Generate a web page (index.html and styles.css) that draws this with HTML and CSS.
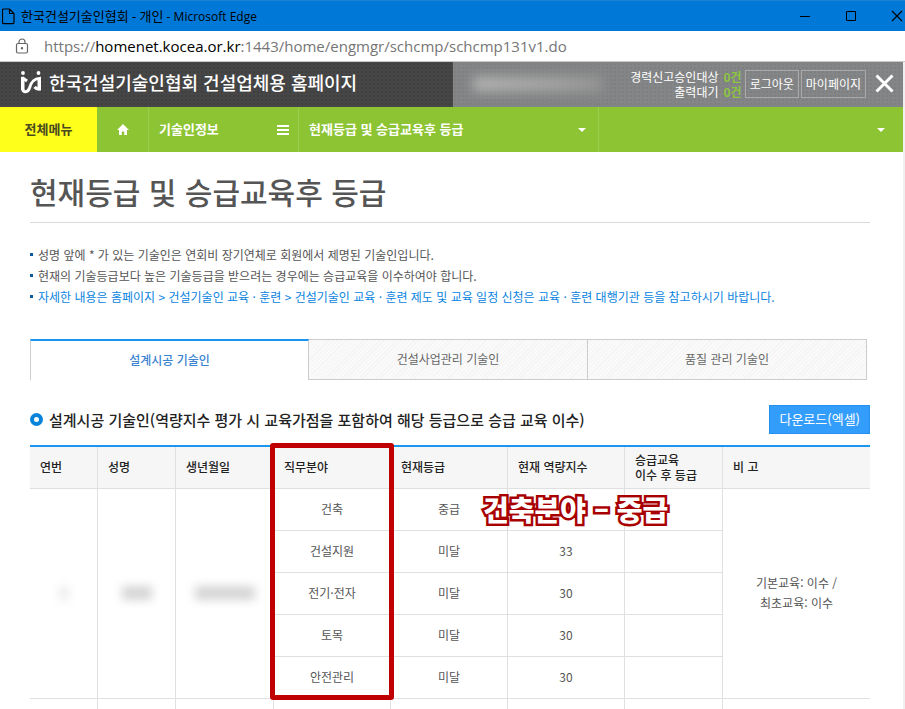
FILE: index.html
```html
<!DOCTYPE html>
<html lang="ko">
<head>
<meta charset="utf-8">
<meta name="viewport" content="width=device-width, initial-scale=1">
<title>한국건설기술인협회 - 개인</title>
<link rel="stylesheet" href="styles.css">
</head>
<body>
<div class="window">
  <div class="titlebar">
    <svg class="doc-icon" width="13" height="17" viewBox="0 0 13 17" fill="none" stroke="#000" stroke-width="1.2" aria-hidden="true"><path d="M1.5 1h6l4.5 4.5V14.500a1.200 1.200 0 0 1-1.200 1.200H1.700a1.200 1.200 0 0 1-1.200-1.200V2a1 1 0 0 1 1-1zM7.500 1v4.500H12"/></svg>
    <span class="window-title"><span class="window-name">한국건설기술인협회 - 개인</span> - Microsoft Edge</span>
    <div class="window-controls">
      <button type="button" aria-label="최소화"><svg width="12" height="12" viewBox="0 0 12 12" stroke="#000"><path d="M1 6.500h10"/></svg></button>
      <button type="button" aria-label="최대화"><svg width="12" height="12" viewBox="0 0 12 12" stroke="#000" fill="none"><path d="M1.500 1.500h9v9h-9z"/></svg></button>
      <button type="button" aria-label="닫기"><svg width="12" height="12" viewBox="0 0 12 12" stroke="#000" stroke-width="1.100"><path d="M1 1l10 10M11 1L1 11"/></svg></button>
    </div>
  </div>
  <div class="addressbar">
    <svg width="14" height="16" viewBox="0 0 14 16" fill="none" stroke="#666" stroke-width="1.200" aria-hidden="true"><rect x="1.500" y="5.500" width="11" height="9.500" rx="1.500"/><path d="M4 5.500V4a3 3 0 0 1 6 0v1.500"/><circle cx="7" cy="10.200" r=".6" fill="#666"/></svg>
    <span class="url">https://<span class="host">homenet.kocea.or.kr</span>:1443/home/engmgr/schcmp/schcmp131v1.do</span>
  </div>
  <div class="page">
    <header class="site-header">
      <a class="brand" href="#">
        <svg width="22" height="24" viewBox="0 0 22 24" aria-hidden="true"><g fill="#fff"><circle cx="3" cy="3" r="1.900"/><circle cx="18.500" cy="3" r="1.900"/><path d="M1 6.500L4.500 9V20H1z"/><path d="M17.500 8l3.500-1.500V20.500h-3.500z"/></g><path d="M2.500 18.500C3 23.500 8 22.500 9.500 18C11 13 13 8.500 19.500 8.500M2 7.500L7 11M14.500 17Q16 19 19.500 19" fill="none" stroke="#fff" stroke-width="3"/></svg>
        <span>한국건설기술인협회 건설업체용 홈페이지</span>
      </a>
      <div class="account">
        <span class="hidden-name" aria-hidden="true"></span>
        <dl class="counts">
          <dt>경력신고승인대상</dt><dd>0건</dd>
          <dt>출력대기</dt><dd>0건</dd>
        </dl>
        <div class="account-links">
          <a href="#">로그아웃</a>
          <a href="#">마이페이지</a>
        </div>
        <button class="close" type="button" aria-label="창 닫기"><svg width="19" height="19" viewBox="0 0 19 19" stroke="#fff" stroke-width="3"><path d="M1.500 1.500l16 16M17.500 1.500l-16 16"/></svg></button>
      </div>
    </header>
    <nav class="gnb">
      <a class="all-menu" href="#">전체메뉴</a>
      <a class="home" href="#" aria-label="홈"><svg width="12" height="11" viewBox="0 0 12 11" fill="#fff"><path d="M6 0l6 6h-2v5H7.200V7.500H4.800V11H2V6H0z"/></svg></a>
      <a class="depth-one" href="#"><span>기술인정보</span><svg width="12" height="10" viewBox="0 0 12 10" fill="#fff"><path d="M0 0h12v2H0zM0 4h12v2H0zM0 8h12v2H0z"/></svg></a>
      <a class="depth-two" href="#"><span>현재등급 및 승급교육후 등급</span><svg width="8" height="4" viewBox="0 0 8 4" fill="#fff"><path d="M0 0h8L4 4z"/></svg></a>
      <a class="depth-three" href="#" aria-label="하위 메뉴"><svg width="8" height="4" viewBox="0 0 8 4" fill="#fff"><path d="M0 0h8L4 4z"/></svg></a>
    </nav>
    <main class="content">
      <h1>현재등급 및 승급교육후 등급</h1>
      <ul class="notes">
        <li>성명 앞에 * 가 있는 기술인은 연회비 장기연체로 회원에서 제명된 기술인입니다.</li>
        <li>현재의 기술등급보다 높은 기술등급을 받으려는 경우에는 승급교육을 이수하여야 합니다.</li>
        <li class="guide">자세한 내용은 홈페이지 &gt; 건설기술인 교육 · 훈련 &gt; 건설기술인 교육 · 훈련 제도 및 교육 일정 신청은 교육 · 훈련 대행기관 등을 참고하시기 바랍니다.</li>
      </ul>
      <div class="tabs" role="tablist">
        <button type="button" role="tab" aria-selected="true">설계시공 기술인</button>
        <button type="button" role="tab" aria-selected="false">건설사업관리 기술인</button>
        <button type="button" role="tab" aria-selected="false">품질 관리 기술인</button>
      </div>
      <div class="section-head">
        <h2>설계시공 기술인(역량지수 평가 시 교육가점을 포함하여 해당 등급으로 승급 교육 이수)</h2>
        <button class="download" type="button">다운로드(엑셀)</button>
      </div>
      <div class="table-wrap">
        <table>
          <colgroup><col class="c-no"><col class="c-name"><col class="c-birth"><col class="c-mid"><col class="c-mid"><col class="c-mid"><col class="c-after"><col></colgroup>
          <thead>
            <tr><th scope="col">연번</th><th scope="col">성명</th><th scope="col">생년월일</th><th scope="col">직무분야</th><th scope="col">현재등급</th><th scope="col">현재 역량지수</th><th scope="col">승급교육<br>이수 후 등급</th><th scope="col">비 고</th></tr>
          </thead>
          <tbody>
            <tr><td rowspan="5"><span class="smudge smudge-no"></span></td><td rowspan="5"><span class="smudge smudge-name"></span></td><td rowspan="5"><span class="smudge smudge-birth"></span></td><td>건축</td><td>중급</td><td></td><td></td><td class="remark" rowspan="5">기본교육: 이수 /<br>최초교육: 이수</td></tr>
            <tr><td>건설지원</td><td>미달</td><td>33</td><td></td></tr>
            <tr><td>전기·전자</td><td>미달</td><td>30</td><td></td></tr>
            <tr><td>토목</td><td>미달</td><td>30</td><td></td></tr>
            <tr><td>안전관리</td><td>미달</td><td>30</td><td></td></tr>
            <tr><td></td><td></td><td></td><td></td><td></td><td></td><td></td><td></td></tr>
          </tbody>
        </table>
        <div class="mark-frame"></div>
        <strong class="mark-label">건축분야 – 중급</strong>
      </div>
    </main>
  </div>
</div>
</body>
</html>
```
FILE: styles.css
```css
*, *::before { box-sizing: border-box; }

body {
  margin: 0;
  background: #fff;
  color: #555;
  font-family: "Noto Sans CJK KR", sans-serif;
  font-size: 12px;
}

a { color: inherit; text-decoration: none; }

button {
  margin: 0;
  padding: 0;
  border: 0;
  background: none;
  color: inherit;
  font: inherit;
}

svg { display: block; flex: none; }

.window {
  display: flex;
  flex-direction: column;
  height: 100vh;
  overflow: hidden;
}

/* Browser frame */
.titlebar {
  display: flex;
  flex: none;
  align-items: center;
  gap: 6px;
  height: 31px;
  padding-left: 2px;
  background: #0078d7;
  border-top: 1px solid #1c83d6;
  color: #000;
}

.window-title {
  font-family: "Open Sans", "Noto Sans CJK KR", sans-serif;
  font-size: 12px;
  line-height: 20px;
}

.window-name { font-size: 13px; }

.window-controls {
  display: flex;
  gap: 34px;
  margin-left: auto;
  padding-right: 2px;
}

.addressbar {
  display: flex;
  flex: none;
  align-items: center;
  gap: 15px;
  height: 31px;
  padding-left: 15px;
  border-bottom: 1px solid #c8c8c8;
}

.url {
  color: #767676;
  font-family: "Open Sans", sans-serif;
  font-size: 15px;
  line-height: 20px;
}

.host { color: #000; }

.page {
  flex: 1;
  min-height: 0;
  overflow: hidden;
  border-right: 2px solid #f0f0f0;
}

/* Site header */
.site-header {
  display: flex;
  height: 45px;
  color: #fff;
}

.brand {
  display: flex;
  align-items: center;
  gap: 7px;
  width: 453px;
  padding: 0 0 5px 20px;
  background: radial-gradient(#3f3f3f 1px, transparent 1px) 0 0 / 4px 4px #464646;
  font-size: 18px;
  font-weight: 500;
  white-space: nowrap;
}

.account {
  display: flex;
  flex: 1;
  align-items: center;
  padding: 0 9px 2px 20px;
  background: radial-gradient(#7e7f80 1px, transparent 1px) 0 0 / 4px 4px #848586;
}

.hidden-name {
  width: 130px;
  height: 14px;
  background: linear-gradient(90deg, #b5b5b5, #a6a6a6 60%, #959595);
  filter: blur(6px);
}

.counts {
  display: grid;
  grid-template-columns: auto auto;
  column-gap: 5px;
  margin: 0 3px 0 auto;
  line-height: 15px;
  text-align: right;
  white-space: nowrap;
}

.counts dd {
  margin: 0;
  color: #8cc63f;
  font-weight: 700;
}

.account-links {
  display: flex;
  gap: 2px;
  white-space: nowrap;
}

.account-links a {
  height: 28px;
  padding: 0 4px;
  border: 1px solid #aaa;
  line-height: 26px;
}

.close { margin-left: 9px; }

/* Green navigation */
.gnb {
  display: flex;
  height: 45px;
  background: #8cc433;
  color: #fff;
  font-size: 13px;
  font-weight: 700;
}

.gnb a {
  display: flex;
  align-items: center;
  justify-content: space-between;
  border-right: 1px solid #9bcd50;
}

.gnb .all-menu {
  justify-content: center;
  width: 97px;
  padding-bottom: 2px;
  border: 0;
  background: #ffff1c;
  color: #4a4a20;
}

.gnb span { padding-bottom: 2px; }

.gnb .home { justify-content: center; width: 52px; }
.gnb .depth-one { width: 150px; padding: 0 9px 0 10px; }
.gnb .depth-two { width: 300px; padding: 0 12px 0 10px; }

.gnb .depth-three {
  flex: 1;
  justify-content: flex-end;
  padding-right: 18px;
  border: 0;
}

/* Content */
.content { padding: 19px 33px 0 30px; }

h1 {
  margin: 0;
  height: 52px;
  border-bottom: 1px solid #d9d9d9;
  color: #555;
  font-size: 30px;
  font-weight: 500;
  line-height: 40px;
}

.notes {
  margin: 0;
  padding: 21px 0 0;
  list-style: none;
  line-height: 21px;
}

.notes li {
  display: flex;
  align-items: center;
  gap: 5px;
  white-space: nowrap;
}

.notes li::before {
  content: "";
  width: 3px;
  height: 3px;
  background: #0b5a9c;
}

.notes .guide { color: #0a84e0; }

.tabs {
  display: grid;
  grid-template-columns: repeat(3, 1fr);
  margin: 32px 3px 0 0;
}

.tabs button {
  height: 41px;
  padding-bottom: 2px;
  border: 1px solid #ccc;
  border-left-width: 0;
  background: repeating-linear-gradient(135deg, #fafafa 0 2px, #f4f4f4 2px 3px);
  color: #666;
}

.tabs [aria-selected="true"] {
  border-top: 2px solid #1a96f0;
  border-bottom: 0;
  border-left-width: 1px;
  background: #fff;
  color: #3b83cf;
  font-weight: 500;
}

.section-head {
  display: flex;
  align-items: center;
  justify-content: space-between;
  padding: 25px 0 11px;
}

h2 {
  display: flex;
  align-items: center;
  gap: 6px;
  margin: 0;
  color: #222;
  font-size: 15px;
  font-weight: 500;
  white-space: nowrap;
}

h2::before {
  content: "";
  width: 13px;
  height: 13px;
  border: 4px solid #0a84d8;
  border-radius: 50%;
}

.download {
  height: 29px;
  padding: 0 9px 2px;
  border: 1px solid #2590ee;
  background: #339dfc;
  color: #fff;
  font-size: 13px;
}

.table-wrap { position: relative; }

table {
  width: 100%;
  border-spacing: 0;
  border-top: 2px solid #1a96f0;
  table-layout: fixed;
}

.c-no { width: 68px; }
.c-name { width: 78px; }
.c-birth { width: 98px; }
.c-mid { width: 117px; }
.c-after { width: 98px; }

th, td {
  height: 42px;
  padding: 0 0 2px;
  border-right: 1px solid #e0e0e0;
  border-bottom: 1px solid #e0e0e0;
}

th:last-child, .remark, tr:last-child td:last-child { border-right: 0; }

th {
  padding-left: 10px;
  background: #f6f6f6;
  color: #222;
  font-weight: 500;
  line-height: 15px;
  text-align: left;
}

td {
  line-height: 20px;
  text-align: center;
}

.smudge {
  display: block;
  height: 14px;
  margin: 0 auto;
  background: #d5d5d5;
  filter: blur(5px);
}

.smudge-no { width: 10px; background: #ececec; }
.smudge-name { width: 30px; }
.smudge-birth { width: 60px; }

/* Annotation over the table */
.mark-frame {
  position: absolute;
  top: -2px;
  left: 240px;
  width: 124px;
  height: 257px;
  border: 5px solid #c00000;
  border-radius: 3px;
}

.mark-label {
  position: absolute;
  top: 44px;
  left: 453px;
  color: #fff;
  font-size: 28px;
  font-weight: 900;
  line-height: 40px;
  white-space: nowrap;
  paint-order: stroke fill;
  stroke-linejoin: round;
  -webkit-text-stroke: 5px #a80000;
}
```
